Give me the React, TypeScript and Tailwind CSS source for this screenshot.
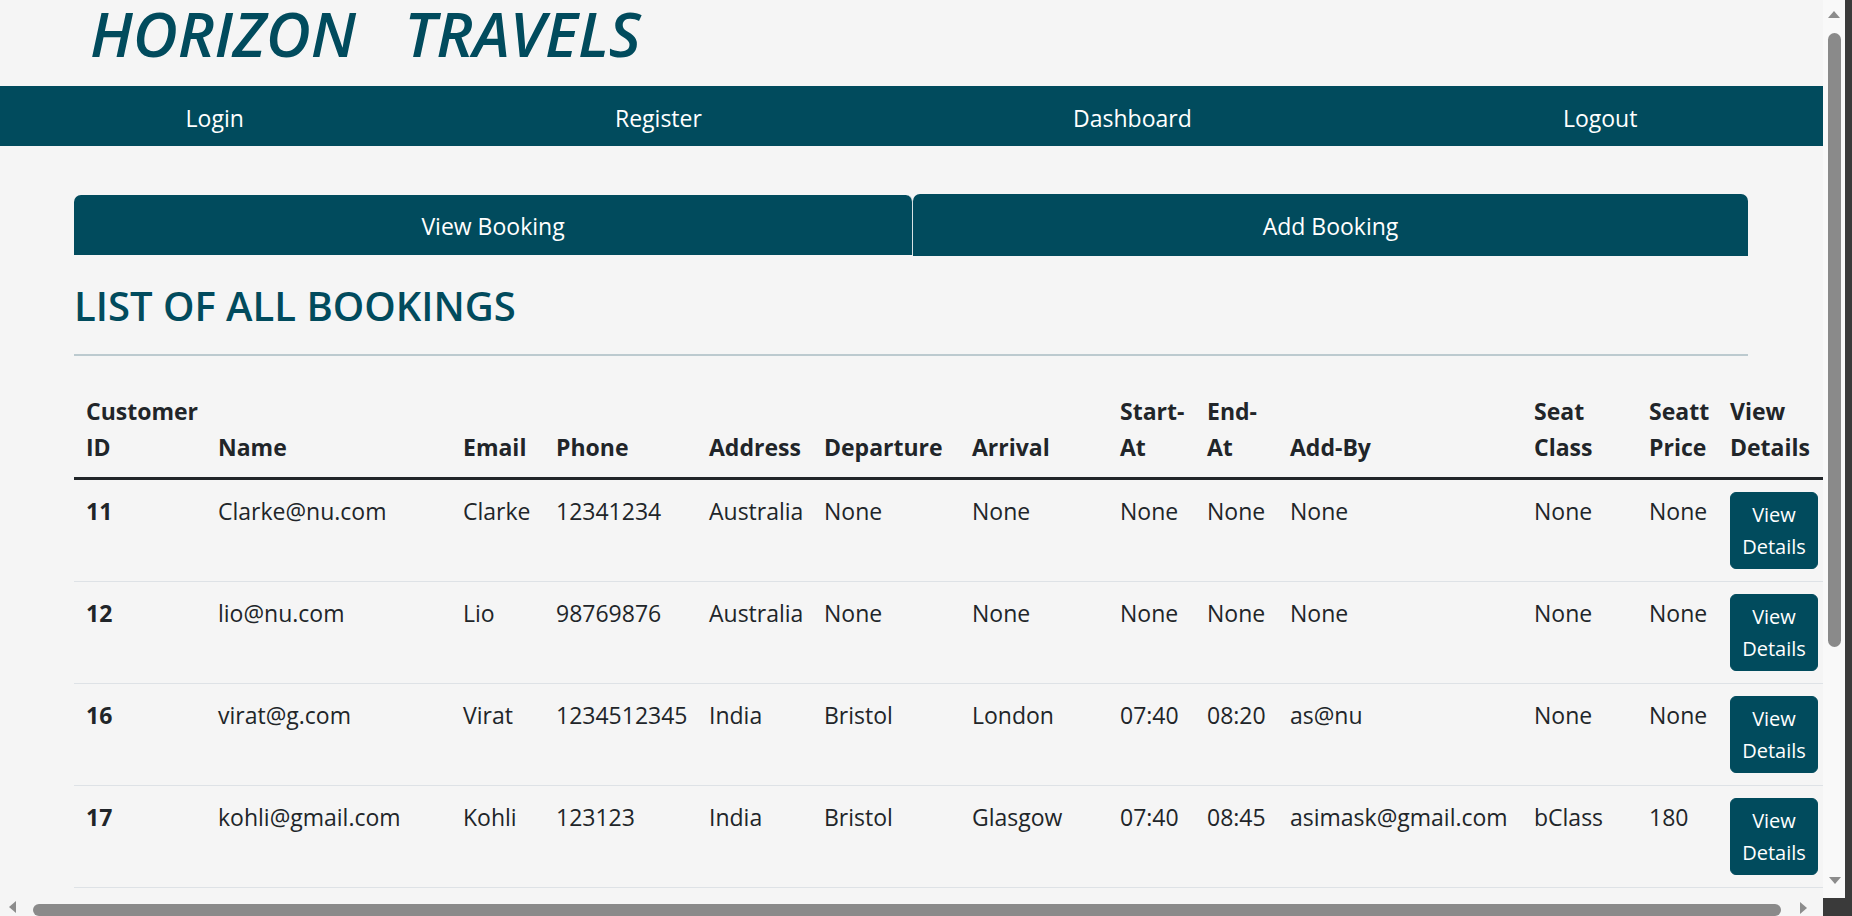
import React from "react";

const rows: string[][] = [
  ["11", "Clarke@nu.com", "Clarke", "12341234", "Australia", "None", "None", "None", "None", "None", "None", "None"],
  ["12", "lio@nu.com", "Lio", "98769876", "Australia", "None", "None", "None", "None", "None", "None", "None"],
  ["16", "virat@g.com", "Virat", "1234512345", "India", "Bristol", "London", "07:40", "08:20", "as@nu", "None", "None"],
  ["17", "kohli@gmail.com", "Kohli", "123123", "India", "Bristol", "Glasgow", "07:40", "08:45", "asimask@gmail.com", "bClass", "180"],
];

const headers: React.ReactNode[] = [
  <>Customer<br />ID</>,
  "Name",
  "Email",
  "Phone",
  "Address",
  "Departure",
  "Arrival",
  <>Start-<br />At</>,
  <>End-<br />At</>,
  "Add-By",
  <>Seat<br />Class</>,
  <>Seatt<br />Price</>,
  <>View<br />Details</>,
];

function Tri({ dir }: { dir: "up" | "down" | "left" | "right" }) {
  const pts =
    dir === "up"
      ? "0,7 6,0 12,7"
      : dir === "down"
      ? "0,0 12,0 6,7"
      : dir === "left"
      ? "7,0 7,12 0,6"
      : "0,0 0,12 7,6";
  const w = dir === "up" || dir === "down" ? 12 : 7;
  const h = dir === "up" || dir === "down" ? 7 : 12;
  return (
    <svg width={w} height={h} viewBox={`0 0 ${w} ${h}`}>
      <polygon points={pts} fill="#8c8c8c" />
    </svg>
  );
}

export default function App() {
  return (
    <div className="flex h-[916px] w-[1852px] overflow-hidden bg-[#3a3a3a] font-['Open_Sans',sans-serif] text-[#212529]">
      <div className="flex w-[1823px] flex-col bg-[#f5f5f5]">
        <div className="h-[898px] overflow-hidden">
          <header className="h-[86px] pl-[90px]">
            <h1 className="whitespace-pre text-[62px] font-semibold italic leading-[66px] text-[#014b5d]">
              HORIZON   TRAVELS
            </h1>
          </header>
          <nav className="flex h-[60px] items-center justify-around bg-[#014b5d] pt-[4px] text-[23px] text-white">
            <span>Login</span>
            <span>Register</span>
            <span>Dashboard</span>
            <span>Logout</span>
          </nav>
          <div className="ml-[74px] w-[1674px]">
            <div className="mt-[49px] flex h-[60px]">
              <button className="flex w-[839px] items-center justify-center rounded-t-[7px] border-r border-[#d8e2e4] bg-[#014b5d] pt-[3px] text-[23px] text-white">
                View Booking
              </button>
              <button className="-mt-px flex h-[62px] flex-1 items-center justify-center rounded-t-[7px] bg-[#014b5d] pt-[3px] text-[23px] text-white">
                Add Booking
              </button>
            </div>
            <h3 className="mt-[26px] text-[40px] font-semibold leading-[50px] text-[#014b5d]">
              LIST OF ALL BOOKINGS
            </h3>
            <div className="mt-[23px] h-[2px] bg-[#bccacf]" />
            <table className="mt-[25px] w-[1756px] table-fixed border-collapse text-left text-[23px] leading-[36px]">
              <colgroup>
                <col className="w-[132px]" />
                <col className="w-[245px]" />
                <col className="w-[93px]" />
                <col className="w-[153px]" />
                <col className="w-[115px]" />
                <col className="w-[148px]" />
                <col className="w-[148px]" />
                <col className="w-[87px]" />
                <col className="w-[83px]" />
                <col className="w-[244px]" />
                <col className="w-[115px]" />
                <col className="w-[81px]" />
                <col className="w-[112px]" />
              </colgroup>
              <thead>
                <tr className="border-b-[3px] border-[#212529]">
                  {headers.map((h, i) => (
                    <th key={i} className="whitespace-nowrap p-[12px] align-bottom font-bold">
                      {h}
                    </th>
                  ))}
                </tr>
              </thead>
              <tbody>
                {rows.map((r, ri) => (
                  <tr key={ri} className="border-b border-[#dee2e6]">
                    {r.map((c, ci) => (
                      <td
                        key={ci}
                        className={
                          ci === 0
                            ? "whitespace-nowrap px-[12px] pb-[12px] pt-[13px] align-top font-bold"
                            : "whitespace-nowrap px-[12px] pb-[12px] pt-[13px] align-top"
                        }
                      >
                        {c}
                      </td>
                    ))}
                    <td className="p-[12px] align-top">
                      <button className="h-[77px] w-[88px] rounded-[6px] border border-[#014b5d] bg-[#014b5d] px-[8px] py-[6px] text-center text-[20px] leading-[31.5px] text-white">
                        View Details
                      </button>
                    </td>
                  </tr>
                ))}
              </tbody>
            </table>
          </div>
        </div>
        <div className="relative flex h-[18px] items-center bg-[#f5f5f5]">
          <div className="absolute left-[9px] top-[3px]">
            <Tri dir="left" />
          </div>
          <div className="absolute left-[33px] top-[6px] h-[12px] w-[1748px] rounded-full bg-[#8a8a8a]" />
          <div className="absolute left-[1800px] top-[4px]">
            <Tri dir="right" />
          </div>
        </div>
      </div>
      <div className="flex w-[29px]">
        <div className="relative h-[898px] w-[22px] bg-[#f9f9f9]">
          <div className="absolute left-[5px] top-[11px]">
            <Tri dir="up" />
          </div>
          <div className="absolute left-[5px] top-[33px] h-[614px] w-[13px] rounded-full bg-[#8a8a8a]" />
          <div className="absolute left-[6px] top-[877px]">
            <Tri dir="down" />
          </div>
        </div>
      </div>
    </div>
  );
}
